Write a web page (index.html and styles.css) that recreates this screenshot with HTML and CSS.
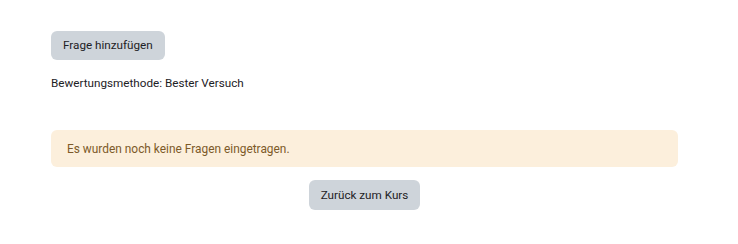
FILE: index.html
```html
<!DOCTYPE html>
<html lang="de">
<head>
<meta charset="utf-8">
<link rel="stylesheet" href="styles.css">
</head>
<body>
<div class="page">
  <div class="actions">
    <button class="btn">Frage hinzufügen</button>
  </div>
  <p class="grading">Bewertungsmethode: Bester Versuch</p>
  <div class="alert">Es wurden noch keine Fragen eingetragen.</div>
  <div class="center">
    <button class="btn">Zurück zum Kurs</button>
  </div>
</div>
</body>
</html>
```
FILE: styles.css
```css
html, body {
  margin: 0;
  padding: 0;
  background: #ffffff;
}
body {
  font-family: Roboto, "Noto Sans", sans-serif;
  font-size: 11.7px;
  color: #1d2125;
}
.page {
  width: 627px;
  padding: 31px 0 0 51px;
}
.actions {
  display: flex;
}
.btn {
  font-family: inherit;
  font-size: 11.7px;
  color: #1d2125;
  background: #ced4da;
  border: none;
  border-radius: 6px;
  height: 29px;
  padding: 0 12px;
  line-height: 29px;
}
.grading {
  margin: 0;
  margin-top: 15px;
  line-height: 16px;
}
.alert {
  margin-top: 39px;
  height: 37px;
  box-sizing: border-box;
  padding: 0 16px;
  display: flex;
  align-items: center;
  background: #fcefdc;
  color: #7d5a29;
  border-radius: 6px;
  font-size: 11.9px;
}
.center {
  display: flex;
  justify-content: center;
  margin-top: 13px;
}
.center .btn {
  height: 30px;
  padding: 0 11.5px;
}
```
